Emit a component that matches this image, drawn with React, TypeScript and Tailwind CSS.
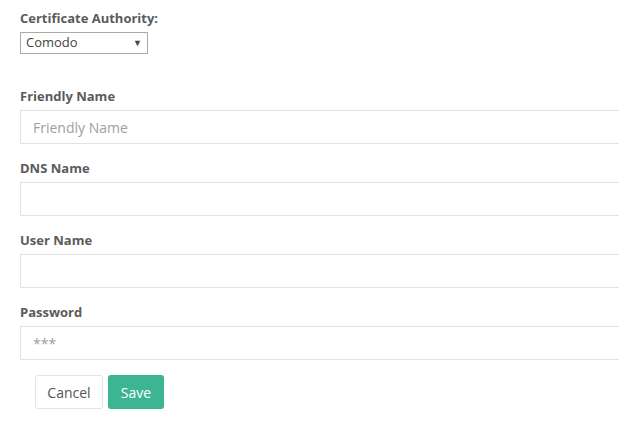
import { useState } from 'react';

const fieldLabel = "block text-[13px] leading-[16px] font-bold text-[#5b5b5b] mb-[6px]";
const fieldInput =
  "block w-[640px] h-[34px] px-3 border border-[#e3e3e3] bg-white text-[14px] text-[#555] placeholder:text-[#a0a0a0] outline-none";

export default function App() {
  const [ca, setCa] = useState('Comodo');

  return (
    <div className="w-[619px] h-[428px] overflow-hidden bg-white font-['Open_Sans',sans-serif]">
      <div className="pl-5 pt-[10px]">
        <label className={fieldLabel}>Certificate Authority:</label>
        <div className="relative w-[128px] h-[22px]">
          <select
            value={ca}
            onChange={(e) => setCa(e.target.value)}
            className="block appearance-none w-full h-full border border-[#a9a9a9] bg-white pl-[5px] text-[13px] text-[#444] outline-none"
          >
            <option>Comodo</option>
            <option>DigiCert</option>
            <option>Let's Encrypt</option>
          </select>
          <span className="pointer-events-none absolute right-[6px] top-[4px] text-[9px] leading-[14px] text-[#444]">▼</span>
        </div>

        <div className="mt-[34px]">
          <label className={fieldLabel}>Friendly Name</label>
          <input className={fieldInput} placeholder="Friendly Name" />
        </div>
        <div className="mt-4">
          <label className={fieldLabel}>DNS Name</label>
          <input className={fieldInput} />
        </div>
        <div className="mt-4">
          <label className={fieldLabel}>User Name</label>
          <input className={fieldInput} />
        </div>
        <div className="mt-4">
          <label className={fieldLabel}>Password</label>
          <input className={fieldInput} type="text" placeholder="***" />
        </div>

        <div className="flex gap-[5px] mt-[15px] pl-[15px]">
          <button className="h-[34px] w-[68px] border border-[#e3e3e3] rounded-[3px] bg-white text-[14px] text-[#555]">
            Cancel
          </button>
          <button className="h-[34px] w-[56px] rounded-[3px] bg-[#3db594] text-[14px] text-white">
            Save
          </button>
        </div>
      </div>
    </div>
  );
}
